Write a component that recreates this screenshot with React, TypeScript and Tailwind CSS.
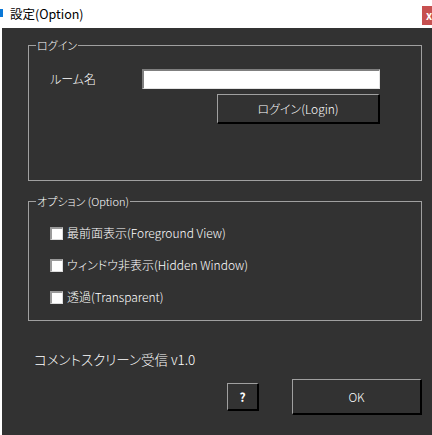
import React from "react";

const jp = { fontFamily: '"Noto Sans CJK JP", "Noto Sans", sans-serif' };

function Check({ label }: { label: string }) {
  return (
    <div className="flex items-center h-[20px]">
      <div className="w-[13px] h-[13px] bg-white border-t-2 border-l-2 border-r border-b border-t-[#9a9a9a] border-l-[#9a9a9a] border-r-[#dcdcdc] border-b-[#dcdcdc]" />
      <span className="ml-[4px] text-[12px] leading-[16px] text-white font-light [font-feature-settings:'palt']">{label}</span>
    </div>
  );
}

function Btn({ children, className }: { children: React.ReactNode; className: string }) {
  return (
    <button
      className={`flex items-center justify-center bg-[#323232] text-white text-[12px] [font-feature-settings:'palt'] border-t border-l border-r-2 border-b-2 border-t-[#a0a0a0] border-l-[#a0a0a0] border-r-black border-b-black ${className}`}
    >
      {children}
    </button>
  );
}

export default function App() {
  return (
    <div className="w-[432px] h-[435px] bg-white flex flex-col overflow-hidden" style={jp}>
      <div className="h-[28px] flex items-start shrink-0">
        <div className="w-[3px] h-[8px] mt-[9px] bg-[#0a78d7]" />
        <span className="ml-[7px] mt-[5px] text-[12.5px] leading-[18px] text-black">設定(Option)</span>
        <div className="ml-auto mt-[6px] w-[10px] h-[19px] bg-[#c75050] overflow-hidden flex items-center">
          <span className="ml-[4px] text-white text-[11px] font-bold leading-none">x</span>
        </div>
      </div>
      <div className="flex-1 ml-[2px] bg-[#323232] pl-[26px] pr-[10px] pt-[9px] flex flex-col">
        <fieldset className="h-[144px] border border-[#a0a0a0] m-0 p-0">
          <legend className="ml-[7px] px-[1px] text-[11px] leading-[16px] text-white font-light [font-feature-settings:'palt']">ログイン</legend>
          <div className="mt-[16px] flex items-center h-[20px] pl-[21px]">
            <span className="w-[92px] text-[12px] leading-[16px] text-white font-light [font-feature-settings:'palt']">ルーム名</span>
            <div className="w-[238px] h-[20px] bg-white border-t-2 border-l-2 border-r border-b border-t-[#7f7f7f] border-l-[#7f7f7f] border-r-[#e3e3e3] border-b-[#e3e3e3]" />
          </div>
          <Btn className="mt-[5px] ml-[188px] w-[163px] h-[30px] font-light">ログイン(Login)</Btn>
        </fieldset>
        <fieldset className="mt-[12px] h-[128px] border border-[#a0a0a0] m-0 p-0">
          <legend className="ml-[7px] px-[1px] text-[11px] leading-[16px] text-white font-light [font-feature-settings:'palt']">オプション (Option)</legend>
          <div className="mt-[14px] pl-[21px] flex flex-col gap-[12px]">
            <Check label="最前面表示(Foreground View)" />
            <Check label="ウィンドウ非表示(Hidden Window)" />
            <Check label="透過(Transparent)" />
          </div>
        </fieldset>
        <div className="mt-[29px] ml-[6px] text-[13.5px] leading-[18px] text-white font-light [font-feature-settings:'palt']">コメントスクリーン受信 v1.0</div>
        <div className="mt-[11px] flex items-center justify-end gap-[33px] h-[36px]">
          <Btn className="w-[32px] h-[28px] font-bold">?</Btn>
          <Btn className="w-[130px] h-[36px] font-light">OK</Btn>
        </div>
      </div>
    </div>
  );
}
